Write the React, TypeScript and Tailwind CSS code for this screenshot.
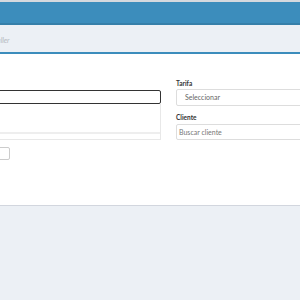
import React from "react";

export default function App() {
  return (
    <div className="w-[300px] h-[300px] overflow-hidden bg-[#ecf0f5] flex flex-col" style={{ fontFamily: "Lato, 'Open Sans', sans-serif" }}>
      <div className="h-[2px] bg-[#d5d9de] shrink-0" />
      <div className="h-[23px] bg-[#3c8dbc] border-b-2 border-[#367fa9] shrink-0" />
      <div className="h-[27px] bg-[#ecf0f5] flex items-center pt-[4px] shrink-0">
        <span className="text-[7px] italic text-[#b5b9bf] ml-[-6px]">Taller</span>
      </div>
      <div className="h-[2px] bg-[#3c8dbc] shrink-0" />
      <div className="h-[152px] bg-white border-b border-[#d2d6de] shrink-0 flex flex-col">
        <div className="flex pt-[26px]">
          <div className="w-[171px] ml-[-10px] shrink-0 flex flex-col">
            <div className="h-[10px]" />
            <div className="h-[14px] border-[1.5px] border-[#333] rounded-[2px] bg-white" />
            <div className="h-[36px] border border-t-0 border-[#e8e8e8] flex flex-col justify-end">
              <div className="h-[2px] bg-[#eeeeee] mb-[5px]" />
            </div>
            <div className="mt-[7px] w-[20px] h-[13px] border border-[#cccccc] rounded-[2px]" />
          </div>
          <div className="ml-[15px] shrink-0 flex flex-col">
            <span className="text-[6.5px] font-bold text-[#333] leading-[8px] h-[8px]">Tarifa</span>
            <div className="mt-[1px] h-[17px] w-[140px] border border-[#dddddd] rounded-[2px] flex items-center pl-[8px]">
              <span className="text-[7px] text-[#666]">Seleccionar</span>
            </div>
            <span className="mt-[8px] text-[6.5px] font-bold text-[#333] leading-[8px] h-[8px]">Cliente</span>
            <div className="mt-[2px] h-[16px] w-[140px] border border-[#dddddd] rounded-[2px] flex items-center pl-[2px]">
              <span className="text-[7px] text-[#777]">Buscar cliente</span>
            </div>
          </div>
        </div>
      </div>
    </div>
  );
}
